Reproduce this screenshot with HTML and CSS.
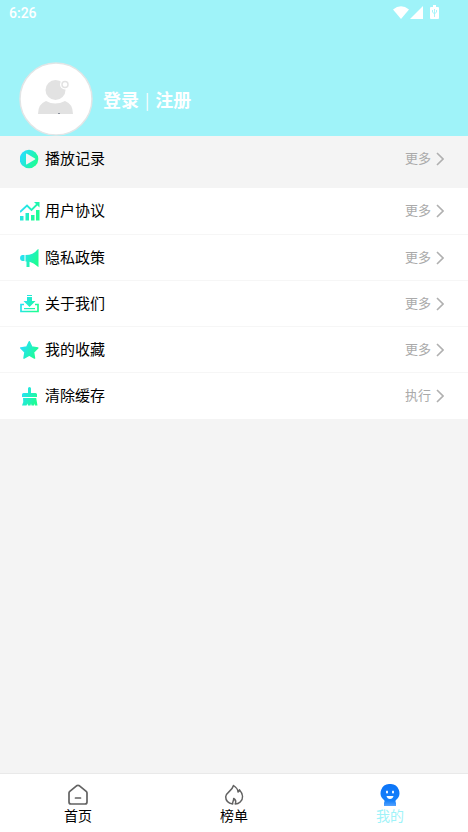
FILE: index.html
```html
<!DOCTYPE html>
<html lang="zh-CN">
<head>
<meta charset="utf-8">
<meta name="viewport" content="width=device-width, initial-scale=1">
<title>我的</title>
<link rel="stylesheet" href="styles.css">
</head>
<body>
<svg class="defs" aria-hidden="true">
  <defs>
    <linearGradient id="mint" gradientUnits="userSpaceOnUse" x1="2" y1="6" x2="17" y2="13">
      <stop offset="0" stop-color="#27e0f8"/>
      <stop offset="1" stop-color="#1dfd94"/>
    </linearGradient>
    <linearGradient id="blue" x1="0" y1="0" x2="0" y2="1">
      <stop offset="0" stop-color="#0b74f8"/>
      <stop offset=".75" stop-color="#1681fa"/>
      <stop offset="1" stop-color="#5aa5ff"/>
    </linearGradient>
    <symbol id="chevron" viewBox="0 0 8 14"><path d="M1 1l6 6-6 6" fill="none" stroke="#b0b0b0" stroke-width="1.6"/></symbol>
  </defs>
</svg>
<header class="header">
  <div class="status">
    <span>6:26</span>
    <svg class="status-icons" viewBox="0 0 48 16" fill="#fff" aria-hidden="true">
      <path d="M0 4.500Q8-2 16 4.500L8 14z"/>
      <path d="M30 1v13H17z"/>
      <path d="M40 0h3v2h2q1 0 1 1v10q0 1-1 1h-7q-1 0-1-1V3q0-1 1-1h2z"/>
      <path d="M41.500 4v8M39.500 5v2l2 2 2-2V5" fill="none" stroke="#9ff3f9" stroke-width=".9"/>
    </svg>
  </div>
  <div class="profile">
    <svg class="avatar" viewBox="0 0 74 74" role="img" aria-label="头像">
      <circle cx="37" cy="37" r="36" fill="#fff" stroke="#e2e5e6" stroke-width="1.500"/>
      <circle cx="36.500" cy="28" r="10" fill="#e2e2e2"/>
      <path d="M19 52q0-10 8-13 9 5 19 0 8 3 8 13z" fill="#e2e2e2"/>
      <circle cx="46" cy="22.500" r="5" fill="#fff"/>
      <circle cx="46" cy="22.500" r="3" fill="#fff" stroke="#e2e2e2" stroke-width="1.500"/>
      <path d="M39 51h2v1h-2z" fill="#8b909c"/>
    </svg>
    <div class="account"><a href="#login">登录</a><span class="bar">|</span><a href="#register">注册</a></div>
  </div>
</header>
<main class="main">
  <a class="row" href="#history">
    <svg class="icon" viewBox="0 0 20 20" fill="url(#mint)"><circle cx="9" cy="10" r="9.300"/><path d="M6 5.200v9.600q0 1 1 .4l8-4.600q.8-.6 0-1.200l-8-4.600q-1-.6-1 .4z" fill="#f4f4f4"/></svg>
    <span class="label">播放记录</span><span class="more">更多</span><svg class="chevron"><use href="#chevron"/></svg>
  </a>
  <nav class="list" aria-label="设置">
    <a class="row" href="#terms">
      <svg class="icon" viewBox="0 0 20 20" fill="url(#mint)"><path d="M0 15h3.500v4.500H0zM5.500 12H9v7.500H5.500zM11 14h3.500v5.500H11zM16 9h3.500v10.500H16z"/><path d="M0 11l7-6.500 4.500 4.500 6-6" fill="none" stroke="url(#mint)" stroke-width="1.800"/><path d="M14 1h5.500v5.500z"/></svg>
      <span class="label">用户协议</span><span class="more">更多</span><svg class="chevron"><use href="#chevron"/></svg>
    </a>
    <a class="row" href="#privacy">
      <svg class="icon" viewBox="0 0 20 20" fill="url(#mint)"><path d="M4.500 7v6H2q-2-.5-2-3t2-3zM5.500 7q8 0 11.500-5 1-1 1.500-1v18q-.5 0-1.500-1-3-3-7.500-4.300V19H6.500v-5.500h-1z"/></svg>
      <span class="label">隐私政策</span><span class="more">更多</span><svg class="chevron"><use href="#chevron"/></svg>
    </a>
    <a class="row" href="#about">
      <svg class="icon" viewBox="0 0 20 20" fill="url(#mint)"><path d="M7 1h5v1H7zM7 3h5v4h3.500l-6 6-6-6H7z"/><path d="M4 10.500H1v7h17v-7h-3" fill="none" stroke="url(#mint)" stroke-width="1.700"/><path d="M4 14h11v1.200H4z"/></svg>
      <span class="label">关于我们</span><span class="more">更多</span><svg class="chevron"><use href="#chevron"/></svg>
    </a>
    <a class="row" href="#favorites">
      <svg class="icon" viewBox="0 0 20 20" fill="url(#mint)"><path d="M9.300 1.800l2.500 5.200 6 .9-4.300 4.200 1 6-5.200-2.900-5.300 2.900 1-6L.8 7.900l6-.9z" stroke="url(#mint)" stroke-width="1.500" stroke-linejoin="round"/></svg>
      <span class="label">我的收藏</span><span class="more">更多</span><svg class="chevron"><use href="#chevron"/></svg>
    </a>
    <a class="row" href="#clear">
      <svg class="icon" viewBox="0 0 20 20" fill="url(#mint)"><path d="M8 2.500Q8 1 9.500 1T11 2.500V7h4.500q1.500 0 1.500 1.500V11H2V8.500Q2 7 3.500 7H8zM3 12h13.200l1.300 7.500H15l-.5-2-.5 2h-2.500l-.5-2-.5 2H8l-.5-2-1 2H2q2-3.500 1-7.500z"/></svg>
      <span class="label">清除缓存</span><span class="more">执行</span><svg class="chevron"><use href="#chevron"/></svg>
    </a>
  </nav>
</main>
<nav class="tabs" aria-label="主导航">
  <a class="tab" href="#home">
    <svg viewBox="0 0 22 22" fill="none" stroke="#626262" stroke-width="1.700" stroke-linejoin="round" stroke-linecap="round"><path d="M2 9q0-1 .8-1.700l6.700-5.500q1.500-1 3 0l6.700 5.500Q20 8 20 9v9q0 2-2 2H4q-2 0-2-2zM8.500 14h5"/></svg>
    <span>首页</span>
  </a>
  <a class="tab" href="#rank">
    <svg viewBox="0 0 22 22" fill="none" stroke="#626262" stroke-width="1.500" stroke-linejoin="round" stroke-linecap="round"><path d="M10.500 1.500c3 2 4.500 4 4.500 6.500 1-.5 1.200-1.200 1.400-2.200 4 4.500 4 9.200.8 12.200-1.600 1.600-3.200 2-5 2 1-2.200.5-4.200-1.500-5.500.2 2-1.500 3.200-1 5.500-4.500-.8-7-3.500-7-7.300C2.700 8.500 9 7.500 10.500 1.500z"/></svg>
    <span>榜单</span>
  </a>
  <a class="tab active" href="#mine" aria-current="page">
    <svg viewBox="0 0 22 22"><path d="M11 0a9 9 0 0 1 6 16q-1 1 0 3v3q-6 1-12 0v-3q1-2 0-3A9 9 0 0 1 11 0z" fill="url(#blue)"/><ellipse cx="8" cy="8" rx="1" ry="1.500" fill="#fff"/><ellipse cx="14" cy="8" rx="1" ry="1.500" fill="#fff"/><path d="M7.500 12h7q-.7 3-3.500 3t-3.500-3z" fill="#fff"/></svg>
    <span>我的</span>
  </a>
</nav>
</body>
</html>
```
FILE: styles.css
```css
* {
  box-sizing: border-box;
}

body {
  margin: 0;
  min-height: 100vh;
  display: flex;
  flex-direction: column;
  background: #f4f4f4;
  color: #000;
  font: 14px/20px "Noto Sans CJK SC", sans-serif;
}

a {
  color: inherit;
  text-decoration: none;
}

svg {
  display: block;
  flex: none;
}

.defs {
  position: absolute;
  width: 0;
  height: 0;
}

.header {
  background: #9ff3f9;
  color: #fff;
}

.status {
  display: flex;
  justify-content: space-between;
  align-items: center;
  height: 26px;
  padding: 0 27px 0 9px;
  font: 500 14px/20px Roboto, sans-serif;
}

.status-icons {
  width: 48px;
  height: 16px;
}

.profile {
  display: flex;
  align-items: center;
  gap: 10px;
  padding: 36px 19px 0;
}

.avatar {
  width: 74px;
  height: 74px;
}

.account {
  display: flex;
  gap: 6px;
  font-size: 18px;
  font-weight: 700;
}

.bar {
  font-size: 16px;
  font-weight: 400;
}

.main {
  flex: 1;
}

.row {
  display: flex;
  align-items: center;
  height: 46px;
  padding: 0 24px 0 20px;
}

.icon {
  width: 20px;
  height: 20px;
  margin-right: 5px;
}

.label {
  flex: 1;
  padding-bottom: 2px;
  font-size: 15px;
}

.more {
  margin-right: 5px;
  color: #aaa;
  font-size: 13px;
  padding-bottom: 2px;
}

.chevron {
  width: 8px;
  height: 14px;
}

.list {
  margin-top: 6px;
  padding-bottom: 1px;
  background: #fff;
}

.list .row + .row {
  border-top: 1px solid #f6f6f6;
}

.tabs {
  display: flex;
  height: 59px;
  border-top: 1px solid #e9e9e9;
  background: #fff;
}

.tab {
  flex: 1;
  display: flex;
  flex-direction: column;
  align-items: center;
  padding-top: 10px;
  line-height: 18px;
}

.tab svg {
  width: 22px;
  height: 22px;
}

.active {
  color: #9ff3f9;
}
```
